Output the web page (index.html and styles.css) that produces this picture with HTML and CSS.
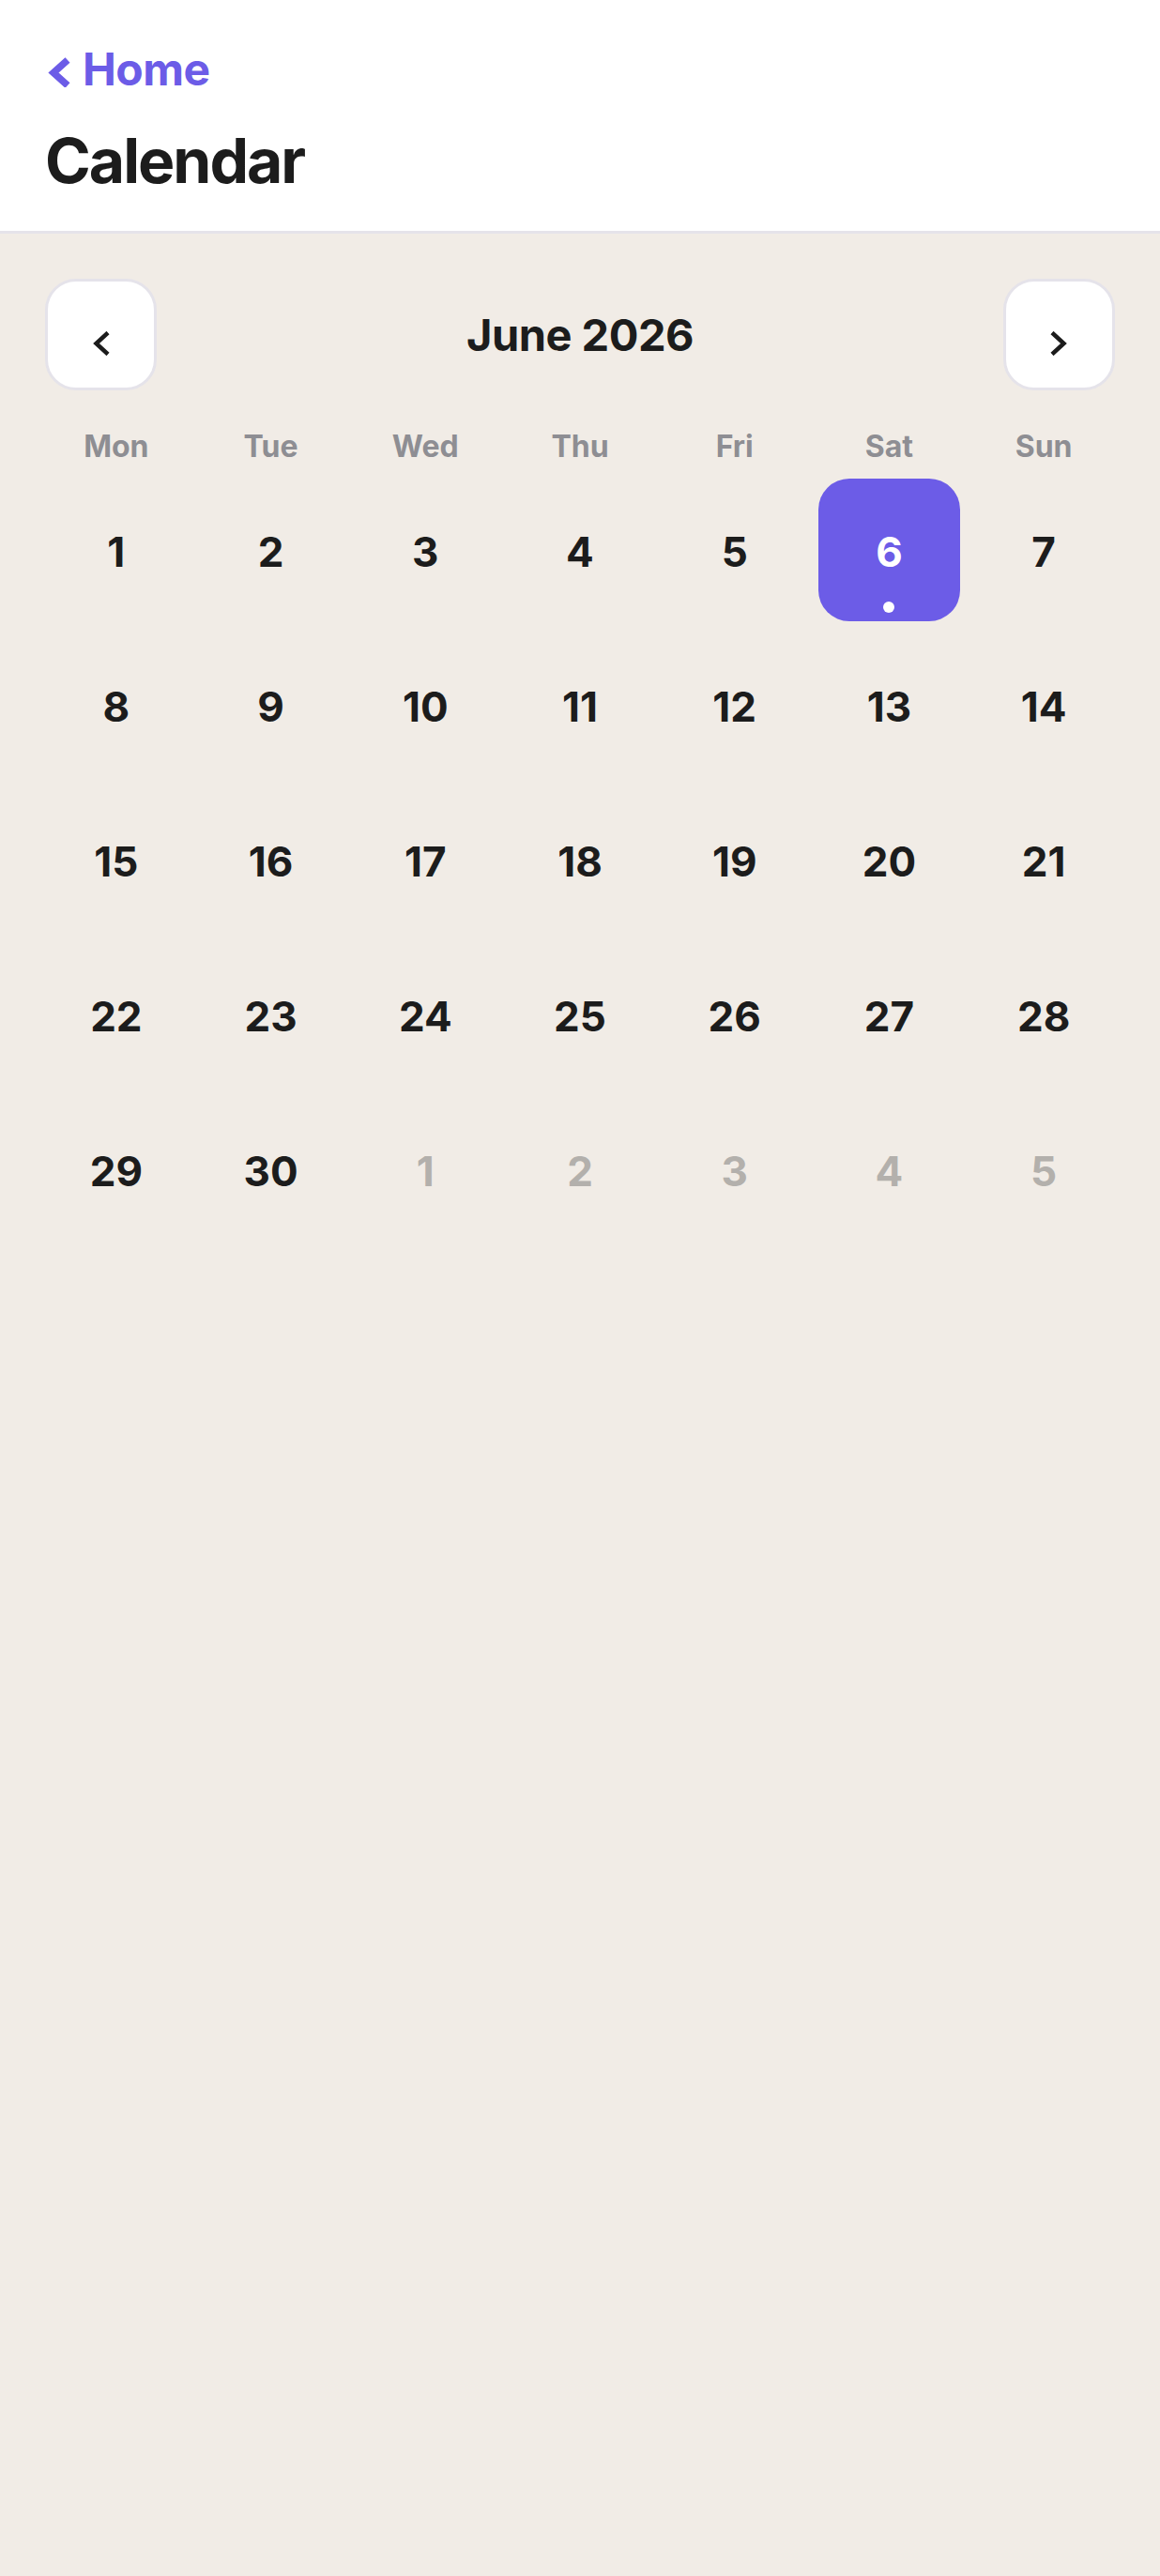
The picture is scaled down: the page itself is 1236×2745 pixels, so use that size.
FILE: index.html
```html
<!DOCTYPE html>
<html lang="en">

<head>
    <meta charset="UTF-8" />
    <meta name="viewport" content="width=device-width, initial-scale=1.0" />
    <title>Calendar</title>
    <link rel="stylesheet" href="styles.css">
</head>

<body>
    <div class="header">
        <a class="back-link" href="#">
            <svg class="back-icon" width="26" height="32" viewBox="0 0 26 32">
                <path d="M22 3 L7 16.5 L22 30" fill="none" stroke="currentColor" stroke-width="7.5" />
            </svg>
            Home
        </a>
        <h1 class="page-title">Calendar</h1>
    </div>

    <div class="calendar">
        <div class="month-bar">
            <button class="nav-btn" onclick="changeMonth(-1)">
                <svg width="18" height="26" viewBox="0 0 18 26">
                    <path d="M16 1.5 L3.5 13 L16 24.5" fill="none" stroke="#1c1c1c" stroke-width="4.5" />
                </svg>
            </button>
            <h2 id="monthTitle" class="month-title">June 2026</h2>
            <button class="nav-btn" onclick="changeMonth(1)">
                <svg width="18" height="26" viewBox="0 0 18 26">
                    <path d="M2 1.5 L14.5 13 L2 24.5" fill="none" stroke="#1c1c1c" stroke-width="4.5" />
                </svg>
            </button>
        </div>

        <div class="weekdays">
            <span>Mon</span>
            <span>Tue</span>
            <span>Wed</span>
            <span>Thu</span>
            <span>Fri</span>
            <span>Sat</span>
            <span>Sun</span>
        </div>

        <div id="days" class="days"></div>
    </div>

    <script>
        const monthNames = ["January", "February", "March", "April", "May", "June",
            "July", "August", "September", "October", "November", "December"];

        let year = 2026;
        let month = 5; // tháng 6
        const selected = { y: 2026, m: 5, d: 6 };
        const eventDays = ["2026-5-6"]; // ngày có sự kiện

        function renderCalendar() {
            document.getElementById("monthTitle").innerText = `${monthNames[month]} ${year}`;

            const first = new Date(year, month, 1);
            const offset = (first.getDay() + 6) % 7; // bắt đầu từ thứ Hai
            const daysInMonth = new Date(year, month + 1, 0).getDate();
            const prevDays = new Date(year, month, 0).getDate();
            const total = Math.ceil((offset + daysInMonth) / 7) * 7;

            const container = document.getElementById("days");
            container.innerHTML = "";

            for (let i = 0; i < total; i++)
            {
                const cell = document.createElement("div");
                cell.className = "day";
                let d = i - offset + 1;

                if (d < 1)
                {
                    d = prevDays + d;
                    cell.classList.add("other");
                } else if (d > daysInMonth)
                {
                    d = d - daysInMonth;
                    cell.classList.add("other");
                } else
                {
                    if (year === selected.y && month === selected.m && d === selected.d)
                    {
                        cell.classList.add("selected");
                    }
                    if (eventDays.includes(`${year}-${month}-${d}`))
                    {
                        cell.classList.add("has-event");
                    }
                }

                cell.innerHTML = `<span>${d}</span>`;
                container.appendChild(cell);
            }
        }

        function changeMonth(step) {
            month += step;
            if (month < 0)
            {
                month = 11;
                year--;
            } else if (month > 11)
            {
                month = 0;
                year++;
            }
            renderCalendar();
        }

        renderCalendar();
    </script>

</body>

</html>
```

FILE: styles.css
```css
html {
    background-color: #f1ece6;
}

body {
    margin: 0;
    font-family: Inter, "Liberation Sans", sans-serif;
    color: #1c1c1c;
    background-color: #f1ece6;
}

.header {
    background-color: #fff;
    padding: 44px 48px 35px;
    border-bottom: 3px solid #e5e3ea;
}

.back-link {
    display: flex;
    align-items: center;
    gap: 12px;
    height: 58px;
    font-size: 48px;
    font-weight: 700;
    letter-spacing: -0.5px;
    color: #6c5ce7;
    text-decoration: none;
}

.back-icon {
    margin-top: 8px;
    margin-left: 2px;
}

.page-title {
    margin: 29px 0 0;
    font-size: 66px;
    line-height: 80px;
    font-weight: 700;
    letter-spacing: -2px;
}

.calendar {
    padding: 48px 48px;
}

.month-bar {
    display: flex;
    justify-content: space-between;
    align-items: center;
}

.nav-btn {
    display: flex;
    justify-content: center;
    align-items: center;
    width: 119px;
    height: 119px;
    padding: 18px 0 0;
    box-sizing: border-box;
    background-color: #fff;
    border: 3px solid #e5e3ea;
    border-radius: 33px;
    cursor: pointer;
}

.month-title {
    margin: 0;
    font-size: 47px;
    font-weight: 700;
    letter-spacing: -0.5px;
}

.weekdays {
    display: grid;
    grid-template-columns: repeat(7, 1fr);
    column-gap: 13px;
    margin-top: 40px;
    text-align: center;
    font-size: 32px;
    line-height: 40px;
    font-weight: 700;
    color: #8e8e93;
}

.days {
    display: grid;
    grid-template-columns: repeat(7, 1fr);
    gap: 13px;
    margin-top: 14px;
}

.day {
    position: relative;
    display: flex;
    justify-content: center;
    align-items: center;
    height: 152px;
    padding-top: 4px;
    box-sizing: border-box;
    border-radius: 33px;
    font-size: 44px;
    font-weight: 700;
}

.day.other {
    color: #b3b0ac;
}

.day.selected {
    background-color: #6c5ce7;
    color: #fff;
}

.day.has-event::after {
    content: "";
    position: absolute;
    bottom: 9px;
    left: 50%;
    width: 12px;
    height: 12px;
    margin-left: -6px;
    border-radius: 50%;
    background-color: #fff;
}
```
